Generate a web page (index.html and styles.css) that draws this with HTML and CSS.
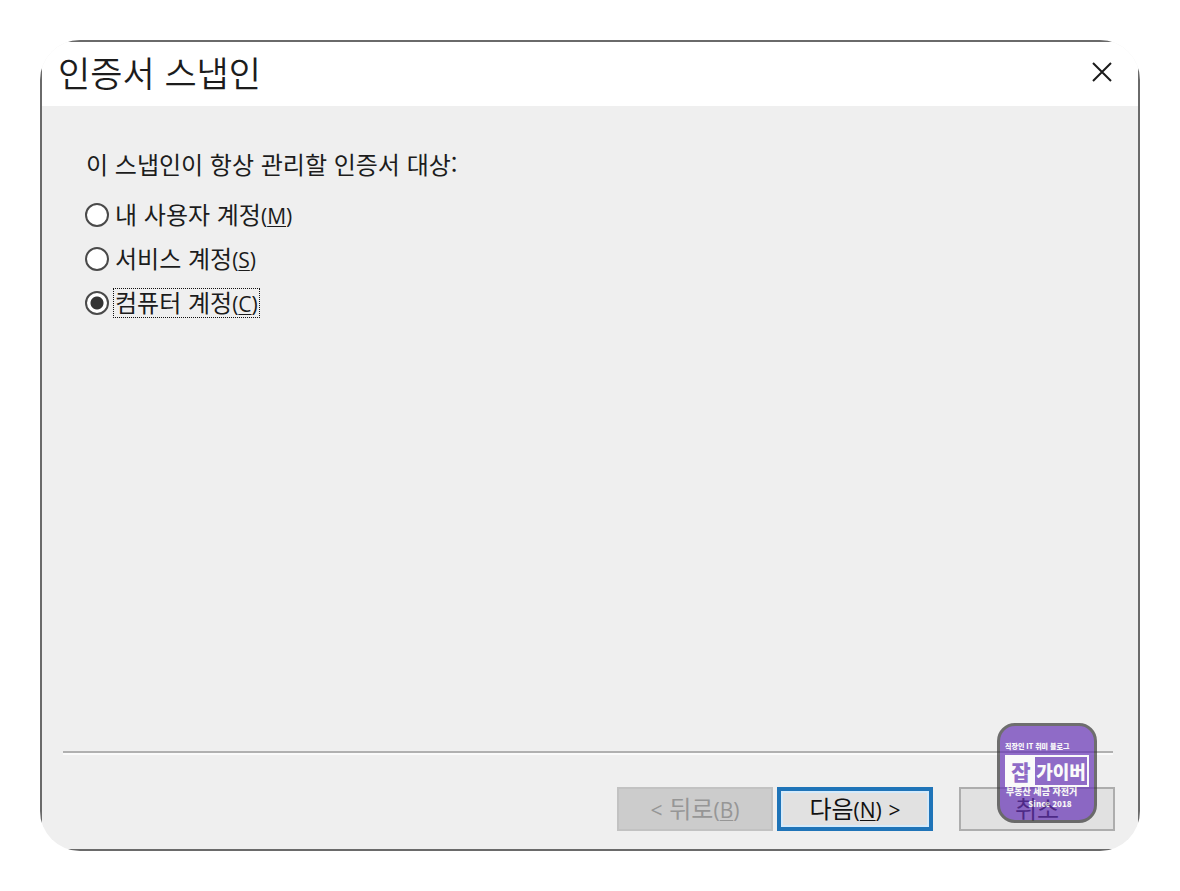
FILE: index.html
```
<!DOCTYPE html>
<html lang="ko">
<head>
    <meta charset="utf-8">
    <title>인증서 스냅인</title>
    <link rel="stylesheet" href="styles.css">
</head>
<body>
    <div class="frame">
        <form class="dialog">
            <div class="titlebar">
                <h1>인증서 스냅인</h1>
                <button type="button" class="close" aria-label="닫기">
                    <svg width="20" height="20" viewBox="0 0 20 20">
                        <path d="M1 1L19 19M19 1L1 19" stroke="#1a1a1a" stroke-width="2" fill="none"/>
                    </svg>
                </button>
            </div>
            <fieldset class="options">
                <legend>이 스냅인이 항상 관리할 인증서 대상:</legend>
                <div class="option">
                    <input type="radio" name="account" id="user">
                    <label for="user">내 사용자 계정<span class="key">(<u>M</u>)</span></label>
                </div>
                <div class="option">
                    <input type="radio" name="account" id="service">
                    <label for="service">서비스 계정<span class="key">(<u>S</u>)</span></label>
                </div>
                <div class="option">
                    <input type="radio" name="account" id="computer" checked>
                    <label for="computer">컴퓨터 계정<span class="key">(<u>C</u>)</span></label>
                </div>
            </fieldset>
            <div class="footer">
                <button type="button" class="btn" disabled><span class="key">&lt;</span> 뒤로<span class="key">(<u>B</u>)</span></button>
                <button type="button" class="btn primary">다음<span class="key">(<u>N</u>)</span> <span class="key">&gt;</span></button>
                <button type="button" class="btn cancel">취소</button>
            </div>
        </form>
        <!-- blog watermark -->
        <div class="badge">
            <p class="top">직장인 IT 취미 블로그</p>
            <div class="name"><span class="job">잡</span><span class="guiber">가이버</span></div>
            <p class="sub">부동산 세금 자전거</p>
            <p class="since">Since 2018</p>
        </div>
    </div>
</body>
</html>
```
FILE: styles.css
```
* {
    box-sizing: border-box;
}

body {
    margin: 40px;
    background-color: #fff;
    color: #1c1c1c;
    font-family: "Noto Sans CJK KR", sans-serif;
    font-size: 24px;
    line-height: 32px;
}

/* rounded corners cut through the square window border */
.frame {
    position: relative;
    display: flex;
    min-height: calc(100vh - 80px);
    border-radius: 40px;
    overflow: hidden;
}

.dialog {
    flex: 1;
    display: flex;
    flex-direction: column;
    border: 2px solid #6a6a6a;
    background-color: #efefef;
}

.titlebar {
    display: flex;
    justify-content: space-between;
    align-items: center;
    height: 64px;
    padding: 0 24px 4px 16px;
    background-color: #fff;
}

h1 {
    margin: 0;
    font-size: 35px;
    font-weight: 350;
    line-height: 48px;
}

.close {
    display: flex;
    padding: 2px;
    border: 0;
    background: none;
}

.options {
    flex: 1;
    margin: 0;
    padding: 42px 43px 0;
    border: 0;
}

legend {
    float: left;
    width: 100%;
    margin-bottom: 20px;
    padding: 0 0 0 1px;
}

.option {
    clear: both;
    display: flex;
    align-items: center;
    gap: 4px;
    margin-bottom: 14px;
}

.option input {
    appearance: none;
    width: 24px;
    height: 24px;
    margin: 0;
    border: 2px solid #4a4a4a;
    border-radius: 50%;
    background-color: #fff;
}

.option input:checked {
    background-image: radial-gradient(circle, #333 6px, #fff 7px);
}

.option label {
    padding: 0 1px 2px;
    border: 1px dotted transparent;
    line-height: 26px;
}

.option input:checked + label {
    border-color: #111;
}

.key {
    font-family: "Open Sans", sans-serif;
    font-size: 21px;
    line-height: 1;
}

u {
    text-underline-offset: 2px;
    text-decoration-thickness: 1px;
}

.footer {
    display: flex;
    justify-content: flex-end;
    gap: 4px;
    margin: 0 25px 0 21px;
    padding: 34px 0 18px;
    border-top: 2px solid #b0b0b0;
    box-shadow: inset 0 2px #fafafa;
}

.btn {
    width: 156px;
    height: 44px;
    padding: 0 0 2px;
    border: 2px solid #adadad;
    background-color: #e1e1e1;
    color: #111;
    font: inherit;
}

.btn:disabled {
    border-color: #c2c2c2;
    background-color: #ccc;
    color: #969696;
}

.primary {
    border: 4px solid #1f74b8;
    box-shadow: inset 0 0 0 2px #d5eafa;
}

.cancel {
    margin-left: 22px;
    margin-right: -2px;
}

.badge {
    position: absolute;
    right: 43px;
    bottom: 28px;
    width: 100px;
    height: 100px;
    padding: 14px 5px 0;
    border: 3px solid #383838;
    border-radius: 18px;
    background-color: #6734b7;
    color: #fff;
    font-weight: 900;
    opacity: 0.7;
}

.badge p {
    margin: 0;
    white-space: nowrap;
}

.badge .top {
    font-size: 7px;
    line-height: 12px;
}

.name {
    display: flex;
    margin-top: 3px;
    border: 2px solid #fff;
    line-height: 28px;
}

.job {
    width: 28px;
    background-color: #fff;
    color: #6734b7;
    font-size: 21px;
    text-align: center;
}

.guiber {
    flex: 1;
    font-size: 18px;
    text-align: center;
}

.badge .sub {
    padding-left: 1px;
    font-size: 9px;
    line-height: 10px;
}

.badge .since {
    padding-left: 6px;
    font-size: 8px;
    line-height: 14px;
    text-align: center;
}
```
